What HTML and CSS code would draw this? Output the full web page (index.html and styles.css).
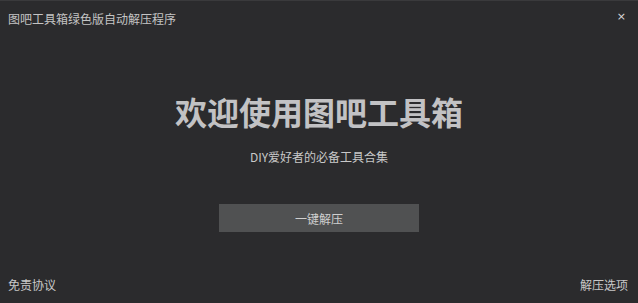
FILE: index.html
```html
<!DOCTYPE html>
<html lang="zh">
<head>
<meta charset="utf-8">
<link rel="stylesheet" href="styles.css">
</head>
<body>
<div class="window">
  <header class="titlebar">
    <span class="title">图吧工具箱绿色版自动解压程序</span>
    <span class="close">×</span>
  </header>
  <main class="main">
    <h1 class="heading">欢迎使用图吧工具箱</h1>
    <p class="subtitle">DIY爱好者的必备工具合集</p>
    <button class="btn">一键解压</button>
  </main>
  <footer class="footer">
    <span class="link">免责协议</span>
    <span class="link">解压选项</span>
  </footer>
</div>
</body>
</html>
```
FILE: styles.css
```css
html, body {
  margin: 0;
  padding: 0;
  background: #2b2b2d;
}
.window {
  width: 638px;
  height: 303px;
  box-sizing: border-box;
  border-top: 1px solid #3a3a3c;
  background: #2b2b2d;
  display: flex;
  flex-direction: column;
  font-family: "Noto Sans CJK SC", "Microsoft YaHei", sans-serif;
  color: #c8c8c8;
}
.titlebar {
  height: 36px;
  display: flex;
  justify-content: space-between;
  align-items: flex-start;
  padding: 9px 12px 0 8px;
  box-sizing: border-box;
}
.title {
  font-size: 12px;
  line-height: 17px;
  color: #c4c4c4;
}
.close {
  font-size: 11px;
  line-height: 14px;
  color: #d8d8d8;
  font-family: "DejaVu Sans", sans-serif;
}
.main {
  flex: 1;
  display: flex;
  flex-direction: column;
  align-items: center;
}
.heading {
  margin: 54px 0 0;
  font-size: 32px;
  line-height: 40px;
  font-weight: 700;
  color: #c2c2c4;
  letter-spacing: 0;
}
.subtitle {
  margin: 17px 0 0;
  font-size: 12px;
  line-height: 17px;
  color: #c8c8c8;
}
.btn {
  margin-top: 39px;
  width: 200px;
  height: 28px;
  border: none;
  background: #505152;
  color: #cfcfcf;
  font-family: inherit;
  font-size: 12px;
  padding: 0;
}
.footer {
  display: flex;
  justify-content: space-between;
  padding: 0 10px 10px 8px;
  height: 28px;
  box-sizing: border-box;
  align-items: center;
}
.link {
  font-size: 12px;
  line-height: 17px;
  color: #c8c8c8;
}
```
